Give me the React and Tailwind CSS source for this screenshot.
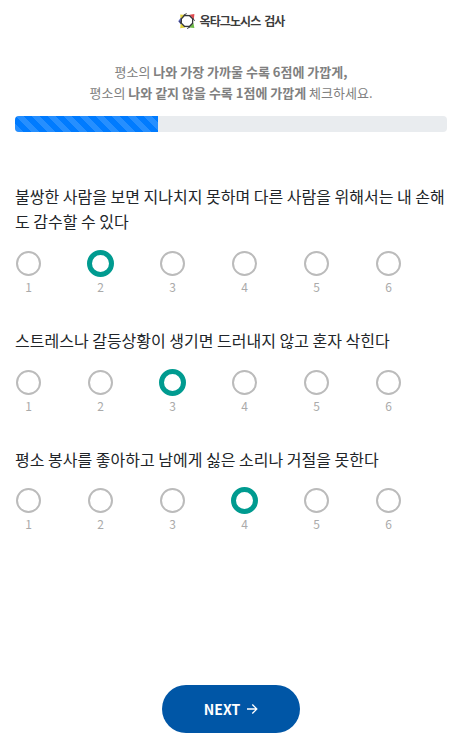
const questions = [
  { text: '불쌍한 사람을 보면 지나치지 못하며 다른 사람을 위해서는 내 손해도 감수할 수 있다', selected: 2, box: 'mt-[52px]', row: 'mt-[16px]' },
  { text: '스트레스나 갈등상황이 생기면 드러내지 않고 혼자 삭힌다', selected: 3, box: 'mt-[31px]', row: 'mt-[16px]' },
  { text: '평소 봉사를 좋아하고 남에게 싫은 소리나 거절을 못한다', selected: 4, box: 'mt-[31px]', row: 'mt-[15px]' },
];

function Logo() {
  return (
    <svg width="18" height="18" viewBox="0 0 18 18" fill="none">
      <path d="M7.5 3 2.2 2.4 2.6 7z" fill="#e3d33a" />
      <path d="M11.5 2.8l4.9-.8-.6 5.4z" fill="#e04a4f" />
      <path d="M15.4 11l1 5-5.4-.6z" fill="#6dbb45" />
      <path d="M7.5 15.4l-5.3.8.6-5z" fill="#e3d33a" />
      <path d="M3 12.4.2 9.2 3 5.4z" fill="#5a62bd" />
      <path d="M6.4 3.5l5.2.2 3.1 3.2-.1 4.4-3.2 3.2-5-.2-3.1-3.2.1-4.4z" fill="white" stroke="#34363b" strokeWidth="1.3" />
      <path d="M5.6 3.2l3-1.6M14.8 6.2l1.8 2.6M12 14.8l-2.8 1.8M3 11.6l-1.4-2.4" stroke="#34363b" strokeWidth="1" />
    </svg>
  );
}

function Question({ item }) {
  return (
    <section className={item.box}>
      <p className="text-[16px] leading-[25px] text-[#212529] break-all">{item.text}</p>
      <div className={`grid grid-cols-6 ${item.row}`}>
        {[1, 2, 3, 4, 5, 6].map((n) => (
          <div key={n} className="flex w-[27px] flex-col items-center">
            <div className="flex h-[27px] w-[27px] items-center justify-center">
              <span
                className={
                  n === item.selected
                    ? 'h-[27px] w-[27px] rounded-full border-5 border-[#009b90]'
                    : 'h-[25px] w-[25px] rounded-full border-2 border-[#bbbbbb]'
                }
              />
            </div>
            <span className="text-[12px] leading-[20px] text-[#aaaaaa]">{n}</span>
          </div>
        ))}
      </div>
    </section>
  );
}

export default function App() {
  return (
    <main className="flex h-[750px] flex-col overflow-hidden bg-white pr-[11px] pl-[15px] font-['Noto_Sans_CJK_KR',sans-serif]">
      <header className="flex h-[42px] items-center justify-center gap-[4px]">
        <Logo />
        <h1 className="text-[12px] leading-[18px] font-bold tracking-[-0.9px] text-[#3c3c3c] [word-spacing:2px]">옥타그노시스 검사</h1>
      </header>
      <p className="mt-[19px] text-center text-[13px] leading-[21px] text-[#808080]">
        평소의 <b>나와 가장 가까울 수록 6점에 가깝게,</b>
        <br />
        평소의 <b>나와 같지 않을 수록 1점에 가깝게</b> 체크하세요.
      </p>
      <div className="mt-[13px] h-[16px] shrink-0 overflow-hidden rounded-[4px] bg-[#e9ecef]">
        <div className="h-full w-[143px] bg-[#007bff] bg-[linear-gradient(45deg,rgba(255,255,255,.15)_25%,transparent_25%,transparent_50%,rgba(255,255,255,.15)_50%,rgba(255,255,255,.15)_75%,transparent_75%,transparent)] bg-[length:16px_16px]" />
      </div>
      {questions.map((q) => (
        <Question key={q.selected} item={q} />
      ))}
      <button className="mx-auto mt-auto mb-[17px] flex h-[48px] w-[138px] shrink-0 items-center justify-center gap-[6px] rounded-full bg-[#0056a6] text-[14px] font-bold text-white">
        NEXT
        <svg width="12" height="12" viewBox="0 0 12 12" fill="none" stroke="currentColor" strokeWidth="1.3">
          <path d="M1 6h9.6M6.3 1.5 10.8 6l-4.5 4.5" />
        </svg>
      </button>
    </main>
  );
}
